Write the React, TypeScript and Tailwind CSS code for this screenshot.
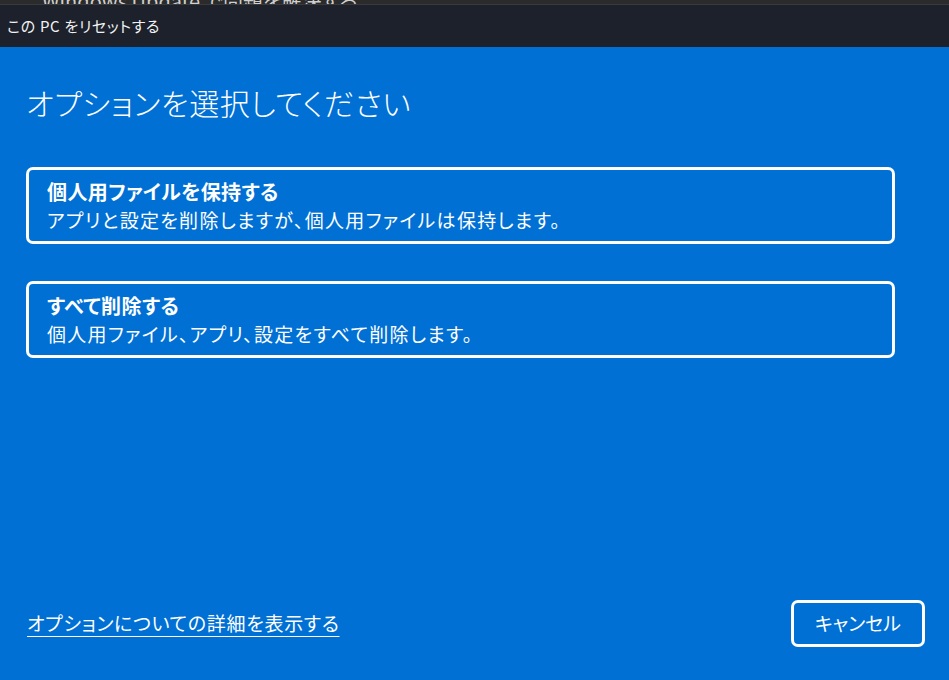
const font = { fontFamily: '"Noto Sans CJK JP", "Noto Sans", sans-serif', fontFeatureSettings: '"palt"' };

const OptionCard = ({ title, desc }: { title: string; desc: string }) => (
  <button className="w-[869px] h-[77px] rounded-[7px] border-[3px] border-white px-[18px] pt-2 pb-[7px] text-left text-white">
    <div className="text-[20px] leading-[28px] font-bold tracking-[0.4px]">{title}</div>
    <div className="text-[19px] leading-[28px] tracking-[1.3px]">{desc}</div>
  </button>
);

export default function App() {
  return (
    <div className="w-[949px] h-[680px] flex flex-col overflow-hidden bg-[#0070d5]" style={font}>
      {/* window behind, cut off */}
      <div className="h-[5px] bg-[#2b2b2b] relative overflow-hidden border-b border-[#3a3a3a]">
        <span className="absolute left-[42px] -top-[14px] text-[20px] text-[#cfcfcf] whitespace-nowrap">Windows Update で問題を解決する</span>
      </div>

      {/* title bar */}
      <div className="h-[42px] bg-[#1c212b] flex items-center px-[7px]">
        <span className="text-[15px] tracking-[0.7px] text-[#f2f2f2]">この PC をリセットする</span>
      </div>

      <div className="flex-1 flex flex-col pl-[26px] pr-[24px] pb-[33px]">
        <h1 className="mt-[35px] text-[30px] leading-[40px] font-light tracking-[0.6px] text-white">オプションを選択してください</h1>

        <div className="mt-[45px] flex flex-col gap-[37px]">
          <OptionCard title="個人用ファイルを保持する" desc="アプリと設定を削除しますが、個人用ファイルは保持します。" />
          <OptionCard title="すべて削除する" desc="個人用ファイル、アプリ、設定をすべて削除します。" />
        </div>

        <div className="mt-auto flex items-center justify-between">
          <a href="#" className="ml-[1px] text-[19px] tracking-[0.7px] text-white underline underline-offset-[5px] decoration-1">オプションについての詳細を表示する</a>
          <button className="w-[134px] h-[47px] rounded-[7px] border-[3px] border-white text-[19px] text-white">キャンセル</button>
        </div>
      </div>
    </div>
  );
}
